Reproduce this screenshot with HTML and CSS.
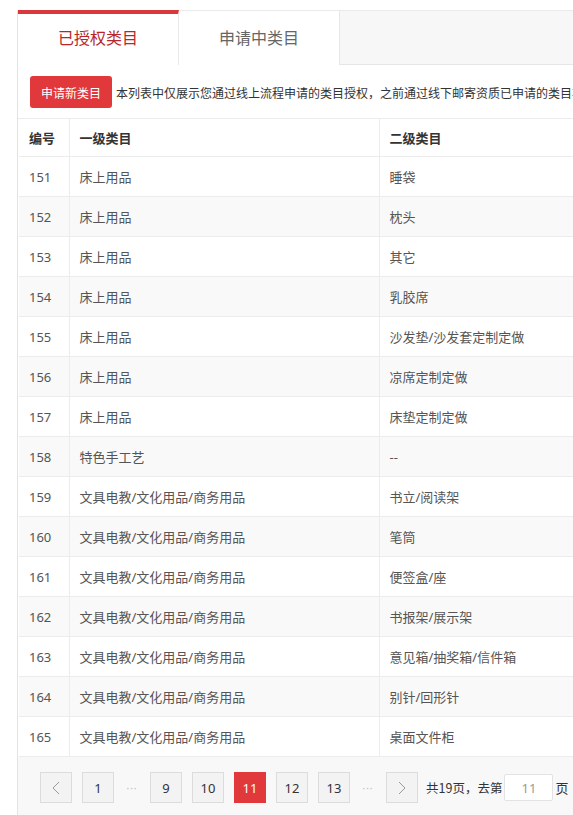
FILE: index.html
```html
<!DOCTYPE html>
<html lang="zh-CN">
<head>
<meta charset="utf-8">
<title>类目管理</title>
<link rel="stylesheet" href="styles.css">
</head>
<body>
<div class="page">
  <div class="panel">
    <div class="tabs">
      <div class="tab tab-active">已授权类目</div>
      <div class="tab">申请中类目</div>
      <div class="tab-rest"></div>
    </div>
    <div class="toolbar">
      <button class="btn-apply">申请新类目</button>
      <span class="notice">本列表中仅展示您通过线上流程申请的类目授权，之前通过线下邮寄资质已申请的类目将不在此列表中展示</span>
    </div>
    <table class="grid">
      <colgroup>
        <col class="c-no">
        <col class="c-l1">
        <col class="c-l2">
      </colgroup>
      <thead>
        <tr><th>编号</th><th>一级类目</th><th>二级类目</th></tr>
      </thead>
      <tbody>
        <tr><td>151</td><td>床上用品</td><td>睡袋</td></tr>
        <tr><td>152</td><td>床上用品</td><td>枕头</td></tr>
        <tr><td>153</td><td>床上用品</td><td>其它</td></tr>
        <tr><td>154</td><td>床上用品</td><td>乳胶席</td></tr>
        <tr><td>155</td><td>床上用品</td><td>沙发垫/沙发套定制定做</td></tr>
        <tr><td>156</td><td>床上用品</td><td>凉席定制定做</td></tr>
        <tr><td>157</td><td>床上用品</td><td>床垫定制定做</td></tr>
        <tr><td>158</td><td>特色手工艺</td><td>--</td></tr>
        <tr><td>159</td><td>文具电教/文化用品/商务用品</td><td>书立/阅读架</td></tr>
        <tr><td>160</td><td>文具电教/文化用品/商务用品</td><td>笔筒</td></tr>
        <tr><td>161</td><td>文具电教/文化用品/商务用品</td><td>便签盒/座</td></tr>
        <tr><td>162</td><td>文具电教/文化用品/商务用品</td><td>书报架/展示架</td></tr>
        <tr><td>163</td><td>文具电教/文化用品/商务用品</td><td>意见箱/抽奖箱/信件箱</td></tr>
        <tr><td>164</td><td>文具电教/文化用品/商务用品</td><td>别针/回形针</td></tr>
        <tr><td>165</td><td>文具电教/文化用品/商务用品</td><td>桌面文件柜</td></tr>
      </tbody>
    </table>
    <div class="pager">
      <a class="pg pg-arrow"><svg width="8" height="14" viewBox="0 0 8 14"><path d="M7 1 L1 7 L7 13" fill="none" stroke="#999" stroke-width="1"/></svg></a>
      <a class="pg">1</a>
      <span class="pg-dots">···</span>
      <a class="pg">9</a>
      <a class="pg">10</a>
      <a class="pg pg-current">11</a>
      <a class="pg">12</a>
      <a class="pg">13</a>
      <span class="pg-dots">···</span>
      <a class="pg pg-arrow"><svg width="8" height="14" viewBox="0 0 8 14"><path d="M1 1 L7 7 L1 13" fill="none" stroke="#999" stroke-width="1"/></svg></a>
      <span class="pg-total">共19页，去第</span>
      <input class="pg-input" type="text" value="11">
      <span class="pg-unit">页</span>
    </div>
  </div>
</div>
</body>
</html>
```
FILE: styles.css
```css
html, body {
  margin: 0;
  padding: 0;
  background: #ffffff;
  overflow: hidden;
}
body {
  font-family: "Noto Sans", "Noto Sans CJK SC", sans-serif;
  color: #333;
  font-size: 13px;
}
.page {
  padding: 10px 0 0 17px;
  width: 1100px;
}
.panel {
  border-left: 1px solid #e3e3e3;
  background: #fff;
}
.tabs {
  display: flex;
  height: 55px;
}
.tab {
  width: 161px;
  box-sizing: border-box;
  display: flex;
  align-items: center;
  justify-content: center;
  font-size: 16px;
  color: #666;
  background: #fff;
  border-top: 1px solid #eaeaea;
  border-right: 1px solid #e6e6e6;
  padding-bottom: 2px;
}
.tab-active {
  border-top: 4px solid #d9393d;
  color: #b8262c;
  border-right: 1px solid #eaeaea;
  padding-bottom: 5px;
}
.tab-rest {
  flex: 1;
  background: #f7f7f7;
  border-top: 1px solid #eaeaea;
  border-bottom: 1px solid #e6e6e6;
}
.toolbar {
  display: flex;
  align-items: center;
  gap: 4px;
  padding: 11px 12px 10px;
  border-bottom: 1px solid #ececec;
  white-space: nowrap;
  overflow: hidden;
}
.btn-apply {
  width: 82px;
  height: 32px;
  border: none;
  border-radius: 3px;
  background: #e0383b;
  color: #fff;
  font-family: "Noto Sans CJK SC", sans-serif;
  font-size: 12px;
  padding: 0;
  flex: none;
}
.notice {
  font-family: "Noto Sans CJK SC", sans-serif;
  font-size: 12px;
  color: #333;
}
.grid {
  border-collapse: collapse;
  table-layout: fixed;
  width: 1080px;
  margin-left: 1px;
}
.c-no { width: 50px; }
.c-l1 { width: 310px; }
.c-l2 { width: 720px; }
.grid th, .grid td {
  text-align: left;
  padding: 0 10px;
  border-bottom: 1px solid #ececec;
  border-right: 1px solid #ececec;
  font-size: 13px;
  white-space: nowrap;
}
.grid th {
  height: 37px;
  font-weight: 600;
  color: #333;
  font-family: "Noto Sans CJK SC", sans-serif;
}
.grid td {
  height: 39px;
  color: #555;
}
.grid tbody tr:nth-child(even) td {
  background: #f9f9f9;
}
.pager {
  display: flex;
  align-items: center;
  gap: 10px;
  background: #f8f8f8;
  padding: 15px 0 12px 22px;
  height: 31px;
}
.pg {
  width: 32px;
  height: 31px;
  box-sizing: border-box;
  border: 1px solid #dcdcdc;
  background: #f3f3f3;
  display: flex;
  align-items: center;
  justify-content: center;
  font-size: 13px;
  color: #333;
}
.pg-current {
  background: #e0383b;
  border-color: #e0383b;
  color: #fff;
}
.pg-dots {
  width: 16px;
  text-align: center;
  color: #bbb;
  font-size: 10px;
  letter-spacing: 1px;
}
.pg-total {
  margin-left: -2px;
  font-size: 12.5px;
  color: #333;
  font-family: "Noto Sans CJK SC", sans-serif;
}
.pg-input {
  width: 49px;
  height: 27px;
  box-sizing: border-box;
  border: 1px solid #e3e3e3;
  border-radius: 2px;
  background: #fff;
  text-align: center;
  color: #999;
  font-size: 13px;
  font-family: "Noto Sans", sans-serif;
  margin-left: -8px;
  padding: 0;
}
.pg-unit {
  margin-left: -8px;
  font-size: 13px;
  color: #333;
  font-family: "Noto Sans CJK SC", sans-serif;
}
```
